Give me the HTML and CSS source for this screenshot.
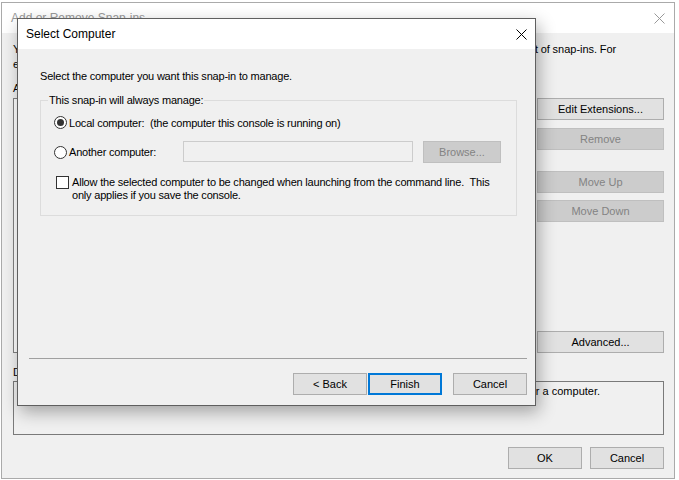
FILE: index.html
```html
<!DOCTYPE html>
<html lang="en">

<head>
    <meta charset="UTF-8">
    <title>Select Computer</title>
    <link rel="stylesheet" href="styles.css">
</head>

<body>
    <div class="desktop">
        <!-- parent window, inactive while the wizard page is open -->
        <div class="window snapins">
            <div class="titlebar">
                <span class="title">Add or Remove Snap-ins</span>
                <svg class="close" width="11" height="11" viewBox="0 0 11 11">
                    <path d="M0.5 0.5L10.5 10.5M10.5 0.5L0.5 10.5" />
                </svg>
            </div>
            <div class="snapins-body">
                <p class="intro">You can select snap-ins for this console from those available on your computer and
                    configure the selected set of snap-ins. For extensible snap-ins, you can configure which extensions
                    are enabled.</p>
                <div class="picker">
                    <span class="label">Available snap-ins:</span>
                    <span></span>
                    <span class="label">Selected snap-ins:</span>
                    <span></span>
                    <div class="listbox"></div>
                    <div class="add-col"><button class="btn" disabled>Add &gt;</button></div>
                    <div class="listbox"></div>
                    <div class="actions">
                        <button class="btn">Edit Extensions...</button>
                        <button class="btn remove" disabled>Remove</button>
                        <button class="btn up" disabled>Move Up</button>
                        <button class="btn down" disabled>Move Down</button>
                        <button class="btn advanced">Advanced...</button>
                    </div>
                </div>
                <span class="label desc-label">Description:</span>
                <div class="desc">The Certificates snap-in allows you to browse the contents of the certificate stores
                    for yourself, a service, or a computer.</div>
                <div class="footer">
                    <button class="btn">OK</button>
                    <button class="btn">Cancel</button>
                </div>
            </div>
        </div>

        <!-- wizard page opened from the parent -->
        <div class="window dialog">
            <div class="titlebar">
                <span class="title">Select Computer</span>
                <svg class="close" width="11" height="11" viewBox="0 0 11 11">
                    <path d="M0.5 0.5L10.5 10.5M10.5 0.5L0.5 10.5" />
                </svg>
            </div>
            <div class="dialog-body">
                <p class="lead">Select the computer you want this snap-in to manage.</p>
                <fieldset class="group">
                    <legend>This snap-in will always manage:</legend>
                    <label class="option opt-local">
                        <span class="radio checked"></span>
                        <span>Local computer:&nbsp; (the computer this console is running on)</span>
                    </label>
                    <div class="option opt-remote">
                        <label class="radio-label"><span class="radio"></span><span>Another computer:</span></label>
                        <span class="textbox"></span>
                        <button class="btn browse" disabled>Browse...</button>
                    </div>
                    <label class="check-row">
                        <span class="checkbox"></span>
                        <span>Allow the selected computer to be changed when launching from the command line.&nbsp;
                            This only applies if you save the console.</span>
                    </label>
                </fieldset>
                <hr class="sep">
                <div class="wizard-buttons">
                    <button class="btn">&lt; Back</button>
                    <button class="btn default">Finish</button>
                    <button class="btn cancel">Cancel</button>
                </div>
            </div>
        </div>
    </div>
</body>

</html>
```

FILE: styles.css
```css
* {
    box-sizing: border-box;
}

html,
body {
    margin: 0;
}

body {
    background: #fff;
    font-family: "Liberation Sans", Arial, sans-serif;
    font-size: 11px;
    color: #000;
}

.desktop {
    position: relative;
    width: 679px;
    height: 480px;
    overflow: hidden;
}

/* windows sit freely on the desktop */
.window {
    position: absolute;
    display: flex;
    flex-direction: column;
    background: #f0f0f0;
}

.titlebar {
    flex-shrink: 0;
    display: flex;
    align-items: center;
    justify-content: space-between;
    height: 30px;
    background: #fff;
    font-size: 12px;
}

.close {
    fill: none;
    stroke: #000;
    stroke-width: 1;
}

.btn {
    height: 22px;
    padding: 0;
    font: inherit;
    font-size: 11px;
    color: #000;
    background: #e1e1e1;
    border: 1px solid #adadad;
    border-radius: 0;
}

.btn:disabled {
    color: #838383;
    background: #ccc;
    border-color: #bfbfbf;
}

/* parent window */
.snapins {
    left: 1px;
    top: 2px;
    width: 674px;
    height: 477px;
    border: 1px solid #aaa;
}

.snapins .titlebar {
    padding: 0 9px;
}

.snapins .title {
    color: #999;
}

.snapins .close {
    stroke: #999;
}

.snapins-body {
    flex: 1;
    display: flex;
    flex-direction: column;
    padding: 9px 10px 9px 11px;
}

.intro {
    margin: 0;
    line-height: 15px;
    word-spacing: -0.45px;
}

.label {
    line-height: 14px;
}

.picker {
    display: grid;
    grid-template-columns: 220px 1fr 220px 127px;
    column-gap: 12px;
    row-gap: 3px;
    margin-top: 9px;
}

.listbox {
    height: 255px;
    background: #fff;
    border: 1px solid #828282;
}

.add-col {
    display: flex;
    align-items: center;
}

.add-col .btn {
    width: 100%;
}

.actions {
    display: flex;
    flex-direction: column;
}

.actions .remove {
    margin-top: 8px;
}

.actions .up {
    margin-top: 21px;
}

.actions .down {
    margin-top: 7px;
}

.actions .advanced {
    margin-top: auto;
}

.desc-label {
    margin-top: 12px;
}

.desc {
    height: 54px;
    margin-top: 2px;
    padding: 2px 4px;
    line-height: 15px;
    white-space: nowrap;
    overflow: hidden;
    border: 1px solid #7a7a7a;
}

.footer {
    display: flex;
    justify-content: flex-end;
    gap: 8px;
    margin-top: 12px;
}

.footer .btn {
    width: 74px;
}

/* Select Computer wizard page */
.dialog {
    left: 17px;
    top: 18px;
    width: 519px;
    height: 388px;
    border: 1px solid #5f5f5f;
    box-shadow: 3px 6px 16px rgba(0, 0, 0, 0.32);
}

.dialog .titlebar {
    padding: 0 8px;
}

.dialog-body {
    flex: 1;
    display: flex;
    flex-direction: column;
    padding: 21px 8px 10px 11px;
    letter-spacing: -0.2px;
}

.lead {
    margin: 0 0 0 11px;
    line-height: 13px;
}

.group {
    min-width: 0;
    margin: 11px 10px 0 11px;
    padding: 0 0 13px 7px;
    border: 1px solid #dcdcdc;
}

.group legend {
    padding: 0 1px;
    line-height: 13px;
}

.option {
    display: flex;
    align-items: center;
    margin-left: 6px;
}

.opt-local {
    height: 13px;
    margin-top: 9px;
}

.opt-remote {
    align-items: flex-start;
    height: 22px;
    margin-top: 12px;
}

.radio {
    flex-shrink: 0;
    display: flex;
    align-items: center;
    justify-content: center;
    width: 13px;
    height: 13px;
    margin-right: 2px;
    background: #fff;
    border: 1px solid #333;
    border-radius: 50%;
}

.radio.checked::after {
    content: "";
    width: 7px;
    height: 7px;
    background: #333;
    border-radius: 50%;
}

.radio-label {
    display: flex;
    align-items: center;
    width: 129px;
    height: 22px;
}

.textbox {
    width: 230px;
    height: 21px;
    margin-right: 10px;
    background: #f0f0f0;
    border: 1px solid #ccc;
}

.browse {
    width: 78px;
}

.check-row {
    display: flex;
    align-items: flex-start;
    margin: 13px 0 0 8px;
    padding-right: 10px;
    line-height: 13px;
}

.checkbox {
    flex-shrink: 0;
    width: 13px;
    height: 13px;
    margin-right: 3px;
    background: #fff;
    border: 1px solid #333;
}

.sep {
    height: 0;
    margin: auto 0 0;
    border: 0;
    border-top: 1px solid #a0a0a0;
}

.wizard-buttons {
    display: flex;
    justify-content: flex-end;
    margin-top: 14px;
}

.wizard-buttons .btn {
    width: 74px;
    letter-spacing: 0;
}

.wizard-buttons .default {
    margin-left: 1px;
    border: 2px solid #0078d7;
}

.wizard-buttons .cancel {
    margin-left: 11px;
}
```
